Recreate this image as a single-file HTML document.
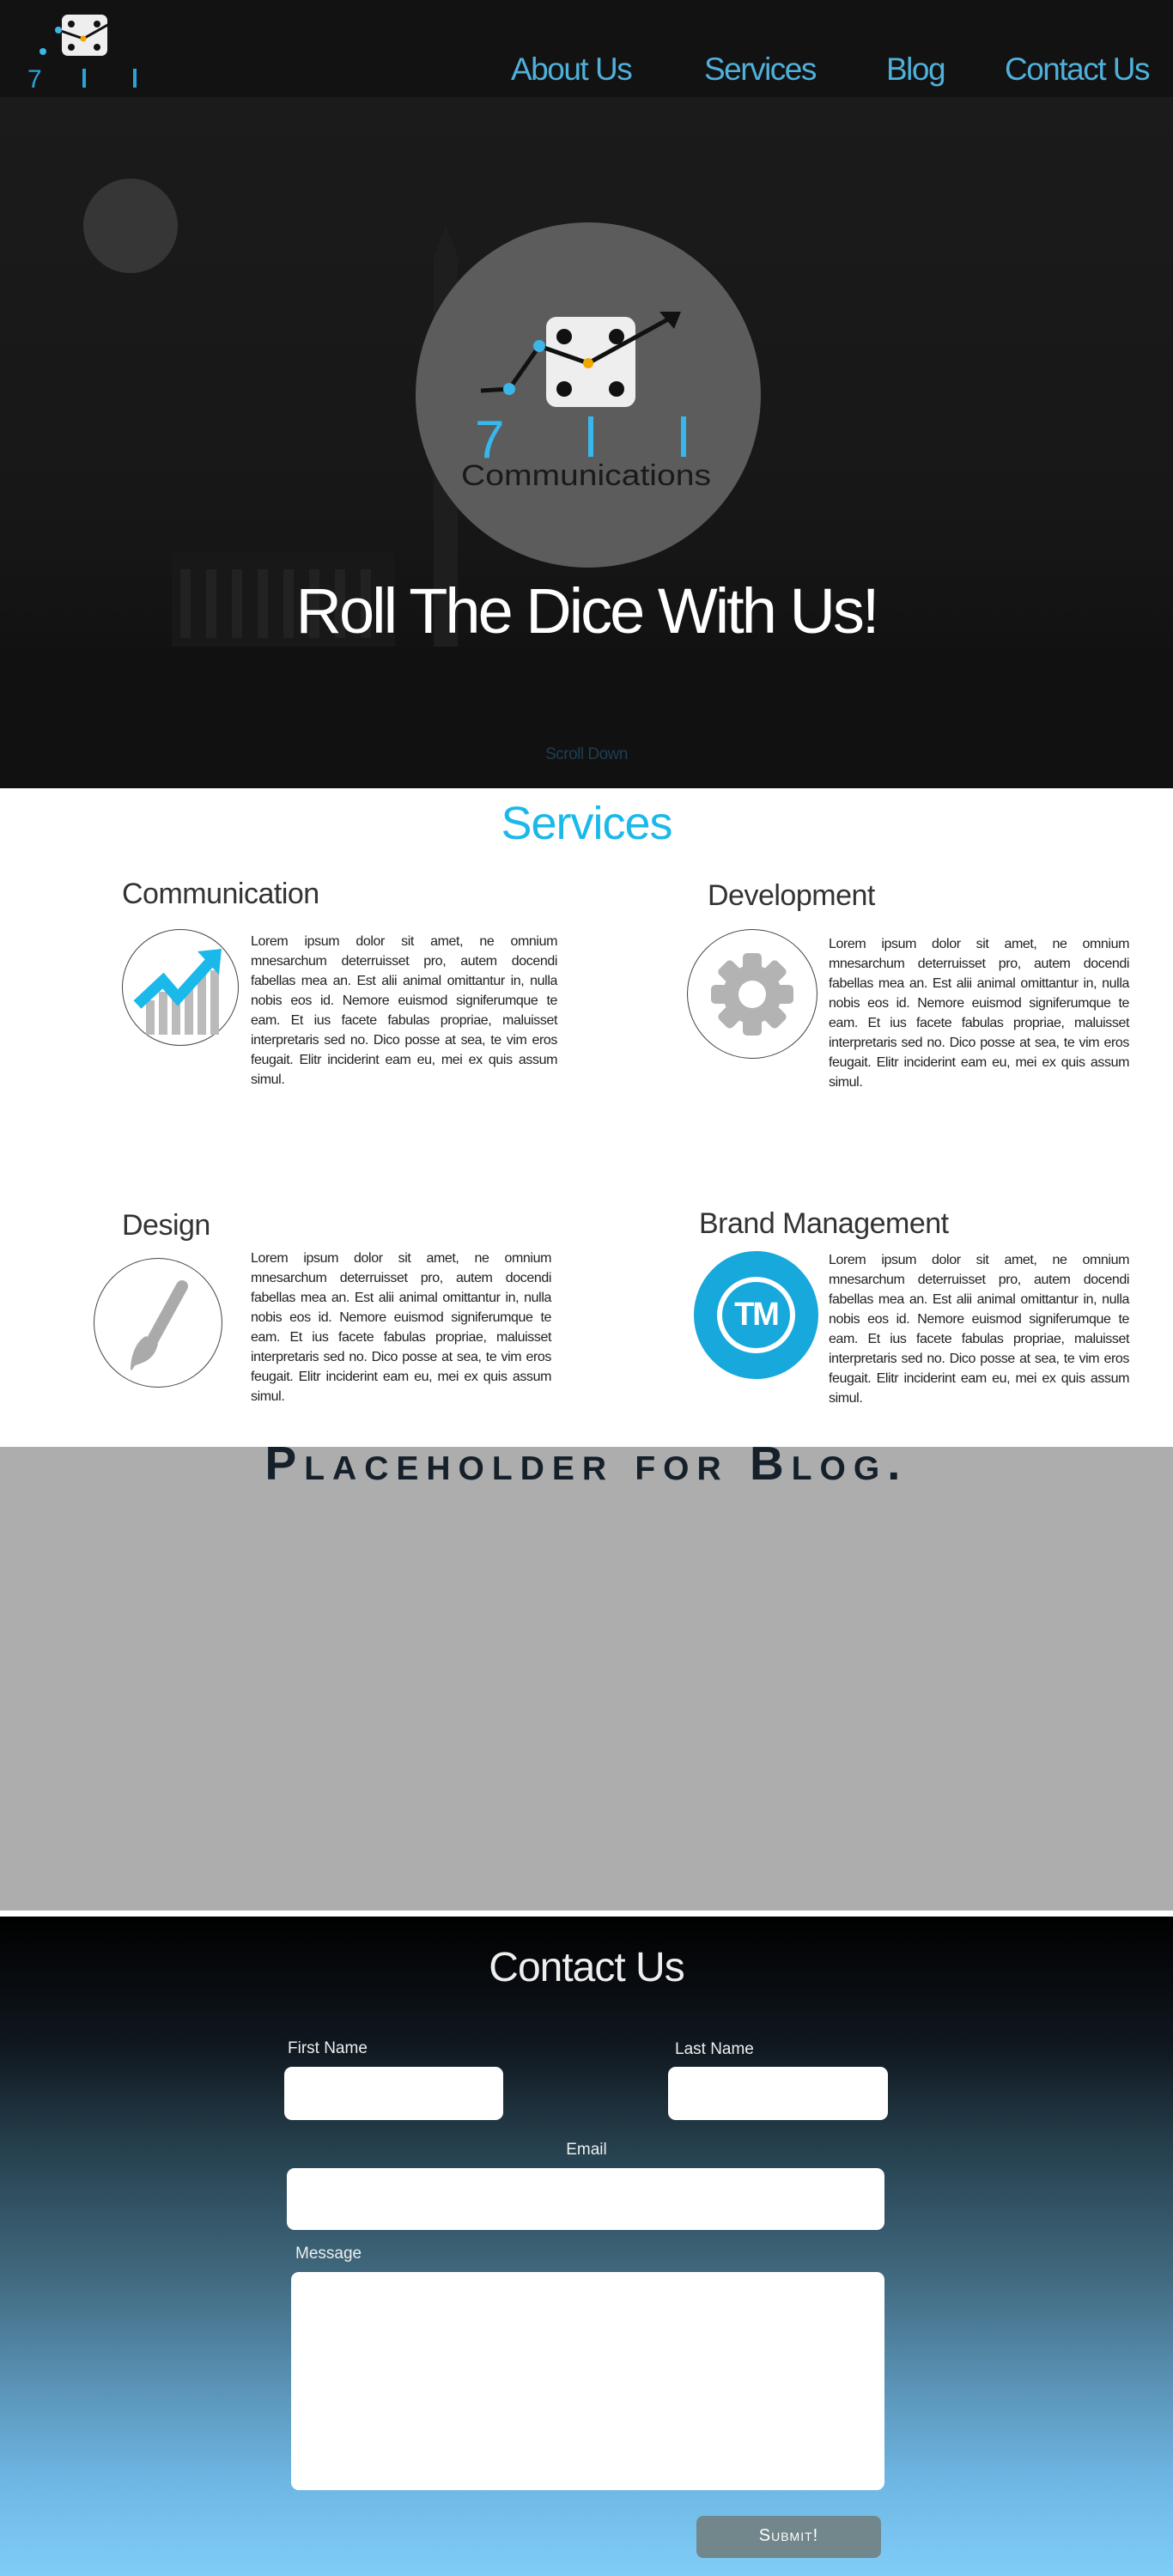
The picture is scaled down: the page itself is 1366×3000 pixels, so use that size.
<!DOCTYPE html>
<html><head><meta charset="utf-8">
<style>
*{margin:0;padding:0;box-sizing:border-box}
body{width:1366px;height:3000px;position:relative;font-family:"Liberation Sans",sans-serif;background:#fff;overflow:hidden}
.abs{position:absolute}
#nav{left:0;top:0;width:1366px;height:113px;background:#121212}
.nl{position:absolute;top:60px;color:#4fb0da;font-size:37px;letter-spacing:-1.5px;white-space:nowrap}
#hero{left:0;top:113px;width:1366px;height:805px;background:linear-gradient(#1b1b1b,#171717 60%,#0d0d0d)}
.h3{position:absolute;color:#333;font-size:34px;letter-spacing:-0.5px}
.txt{position:absolute;font-size:16px;line-height:23px;color:#222;text-align:justify;letter-spacing:-0.4px}
.circ{position:absolute;border:1.5px solid #444;border-radius:50%}
.lbl{position:absolute;color:#eee;font-size:19px}
.inp{position:absolute;background:#fff;border-radius:9px}
</style></head><body>
<div id="nav" class="abs">
 <svg class="abs" style="left:20px;top:10px" width="150" height="100" viewBox="0 0 150 100">
  <rect x="52" y="7" width="53" height="48" rx="7" fill="#eee"/>
  <circle cx="63" cy="18" r="4" fill="#111"/><circle cx="93" cy="18" r="4" fill="#111"/>
  <circle cx="63" cy="45" r="4" fill="#111"/><circle cx="93" cy="45" r="4" fill="#111"/>
  <polyline points="20,52 30,50 48,25 77,35 125,8" fill="none" stroke="#111" stroke-width="3"/>
  <circle cx="30" cy="50" r="4" fill="#3bb6e6"/><circle cx="48" cy="25" r="4" fill="#3bb6e6"/><circle cx="77" cy="35" r="3.5" fill="#f0a800"/>
  <text x="12" y="92" fill="#2aa3d6" font-size="30" font-family="Liberation Sans">7</text>
  <rect x="76" y="70" width="4" height="22" fill="#2aa3d6"/><rect x="135" y="70" width="4" height="22" fill="#2aa3d6"/>
 </svg>
 <div class="nl" style="left:595px">About Us</div>
 <div class="nl" style="left:820px">Services</div>
 <div class="nl" style="left:1032px">Blog</div>
 <div class="nl" style="left:1170px">Contact Us</div>
</div>
<div id="hero" class="abs">
 <svg class="abs" style="left:0;top:0" width="1366" height="805">
  <rect x="505" y="185" width="28" height="540" fill="#1e1e1e"/>
  <polygon points="505,185 519,150 533,185" fill="#1e1e1e"/>
  <rect x="200" y="530" width="260" height="120" fill="#181818"/>
  <g fill="#222"><rect x="210" y="550" width="12" height="80"/><rect x="240" y="550" width="12" height="80"/><rect x="270" y="550" width="12" height="80"/><rect x="300" y="550" width="12" height="80"/><rect x="330" y="550" width="12" height="80"/><rect x="360" y="550" width="12" height="80"/><rect x="390" y="550" width="12" height="80"/><rect x="420" y="550" width="12" height="80"/></g>
  <rect x="0" y="640" width="1366" height="165" fill="#111"/>
  <circle cx="152" cy="150" r="55" fill="#363636"/>
  <circle cx="685" cy="347" r="201" fill="#5c5c5c"/>
  <rect x="636" y="256" width="104" height="105" rx="12" fill="#eee"/>
  <circle cx="657" cy="279" r="9" fill="#111"/><circle cx="718" cy="279" r="9" fill="#111"/>
  <circle cx="657" cy="340" r="9" fill="#111"/><circle cx="718" cy="340" r="9" fill="#111"/>
  <polyline points="560,342 593,340 628,290 685,310 785,255" fill="none" stroke="#111" stroke-width="5"/>
  <polygon points="793,250 768,250 785,270" fill="#111"/>
  <circle cx="593" cy="340" r="7" fill="#3bb6e6"/><circle cx="628" cy="290" r="7" fill="#3bb6e6"/><circle cx="685" cy="310" r="6" fill="#f0a800"/>
  <text x="553" y="420" fill="#36b8ee" font-size="62" font-family="Liberation Sans">7</text>
  <rect x="685" y="372" width="6" height="47" fill="#36b8ee"/><rect x="793" y="372" width="6" height="47" fill="#36b8ee"/>
  <text x="537" y="452" fill="#1a1a1a" font-size="34" font-family="Liberation Sans" textLength="291" lengthAdjust="spacingAndGlyphs">Communications</text>
 </svg>
 <div class="abs" style="left:0;width:1366px;text-align:center;top:556px;color:#fff;font-size:74px;letter-spacing:-3px">Roll The Dice With Us!</div>
 <div class="abs" style="left:0;width:1366px;text-align:center;top:755px;color:#1d3f52;font-size:19px;letter-spacing:-0.5px">Scroll Down</div>
</div>

<div class="abs" style="left:0;width:1366px;text-align:center;top:928px;color:#1ab9ea;font-size:54px;letter-spacing:-1px">Services</div>

<div class="h3" style="left:142px;top:1022px">Communication</div>
<div class="circ" style="left:142px;top:1082px;width:136px;height:136px"></div>
<svg class="abs" style="left:150px;top:1100px" width="120" height="110">
 <g fill="#bbb"><rect x="20" y="65" width="10" height="40"/><rect x="35" y="55" width="10" height="50"/><rect x="50" y="60" width="10" height="45"/><rect x="65" y="50" width="10" height="55"/><rect x="80" y="35" width="10" height="70"/><rect x="95" y="30" width="10" height="75"/></g>
 <polyline points="10,70 40,42 57,62 95,20" fill="none" stroke="#1ab9ea" stroke-width="13"/>
 <polygon points="80,8 108,5 105,35" fill="#1ab9ea"/>
</svg>
<div class="txt" style="left:292px;top:1085px;width:357px">Lorem ipsum dolor sit amet, ne omnium mnesarchum deterruisset pro, autem docendi fabellas mea an. Est alii animal omittantur in, nulla nobis eos id. Nemore euismod signiferumque te eam. Et ius facete fabulas propriae, maluisset interpretaris sed no. Dico posse at sea, te vim eros feugait. Elitr inciderint eam eu, mei ex quis assum simul.</div>

<div class="h3" style="left:824px;top:1024px">Development</div>
<div class="circ" style="left:800px;top:1082px;width:152px;height:151px"></div>
<svg class="abs" style="left:826px;top:1108px" width="100" height="100" viewBox="-50 -50 100 100">
 <g fill="#b3b3b3">
  <circle r="34"/>
  <rect x="-11" y="-48" width="22" height="96" rx="5"/>
  <rect x="-11" y="-48" width="22" height="96" rx="5" transform="rotate(45)"/>
  <rect x="-11" y="-48" width="22" height="96" rx="5" transform="rotate(90)"/>
  <rect x="-11" y="-48" width="22" height="96" rx="5" transform="rotate(135)"/>
 </g>
 <circle r="16" fill="#fff"/>
</svg>
<div class="txt" style="left:965px;top:1088px;width:350px">Lorem ipsum dolor sit amet, ne omnium mnesarchum deterruisset pro, autem docendi fabellas mea an. Est alii animal omittantur in, nulla nobis eos id. Nemore euismod signiferumque te eam. Et ius facete fabulas propriae, maluisset interpretaris sed no. Dico posse at sea, te vim eros feugait. Elitr inciderint eam eu, mei ex quis assum simul.</div>

<div class="h3" style="left:142px;top:1408px">Design</div>
<div class="circ" style="left:109px;top:1465px;width:150px;height:151px"></div>
<svg class="abs" style="left:140px;top:1490px" width="90" height="110">
 <line x1="72" y1="8" x2="38" y2="70" stroke="#aaa" stroke-width="14" stroke-linecap="round"/>
 <path d="M30 66 L44 75 C40 92 30 96 18 100 C16 100 14 108 12 105 C12 90 18 72 30 66Z" fill="#aaa"/>
</svg>
<div class="txt" style="left:292px;top:1454px;width:350px">Lorem ipsum dolor sit amet, ne omnium mnesarchum deterruisset pro, autem docendi fabellas mea an. Est alii animal omittantur in, nulla nobis eos id. Nemore euismod signiferumque te eam. Et ius facete fabulas propriae, maluisset interpretaris sed no. Dico posse at sea, te vim eros feugait. Elitr inciderint eam eu, mei ex quis assum simul.</div>

<div class="h3" style="left:814px;top:1406px">Brand Management</div>
<div class="abs" style="left:808px;top:1457px;width:145px;height:149px;border-radius:50%;background:#17a8dc"></div>
<div class="abs" style="left:835px;top:1487px;width:91px;height:89px;border-radius:50%;border:6px solid #fff;color:#fff;font-weight:bold;font-size:38px;text-align:center;line-height:77px;letter-spacing:-2px">TM</div>
<div class="txt" style="left:965px;top:1456px;width:350px">Lorem ipsum dolor sit amet, ne omnium mnesarchum deterruisset pro, autem docendi fabellas mea an. Est alii animal omittantur in, nulla nobis eos id. Nemore euismod signiferumque te eam. Et ius facete fabulas propriae, maluisset interpretaris sed no. Dico posse at sea, te vim eros feugait. Elitr inciderint eam eu, mei ex quis assum simul.</div>

<div class="abs" style="left:0;top:1685px;width:1366px;height:540px;background:#adadad"></div>
<div class="abs" style="left:0;top:1672px;width:1366px;text-align:center;color:#15202a;font-size:55px;font-weight:bold;font-variant:small-caps;letter-spacing:9px">Placeholder for Blog.</div>

<div class="abs" style="left:0;top:2232px;width:1366px;height:768px;background:linear-gradient(#000 0%,#101820 20%,#274250 36%,#416a80 55%,#5b95b9 72%,#6db5e2 85%,#80cdf8 100%)"></div>
<div class="abs" style="left:0;width:1366px;text-align:center;top:2264px;color:#eee;font-size:48px;letter-spacing:-1px">Contact Us</div>
<div class="lbl" style="left:335px;top:2375px">First Name</div>
<div class="inp" style="left:331px;top:2407px;width:255px;height:62px"></div>
<div class="lbl" style="left:786px;top:2376px">Last Name</div>
<div class="inp" style="left:778px;top:2407px;width:256px;height:62px"></div>
<div class="lbl" style="left:0;width:1366px;text-align:center;top:2493px">Email</div>
<div class="inp" style="left:334px;top:2525px;width:696px;height:72px"></div>
<div class="lbl" style="left:344px;top:2614px">Message</div>
<div class="inp" style="left:339px;top:2646px;width:691px;height:254px"></div>
<div class="abs" style="left:811px;top:2930px;width:215px;height:49px;background:#72878b;border-radius:8px;color:#fff;font-size:20px;font-variant:small-caps;text-align:center;line-height:46px;letter-spacing:1px">Submit!</div>
</body></html>
